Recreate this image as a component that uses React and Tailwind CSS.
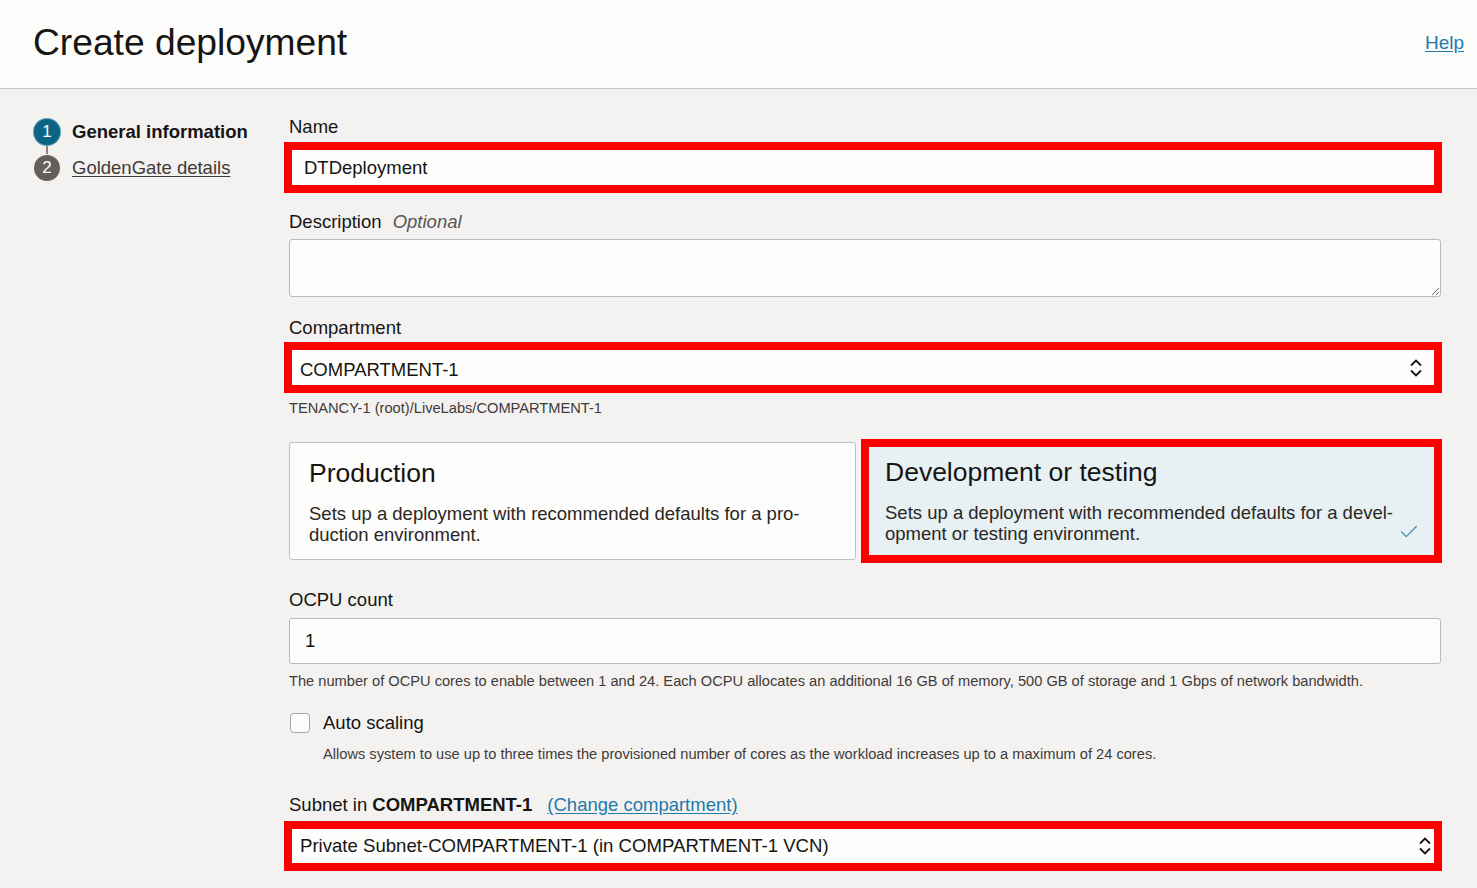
import { Check } from "lucide-react";

function SelectChevron({ className }) {
  return (
    <svg width="14" height="20" viewBox="0 0 14 20" fill="none" className={className}>
      <path d="M2 7.5 L7 2.5 L12 7.5" stroke="#161513" strokeWidth="1.8" />
      <path d="M2 12.5 L7 17.5 L12 12.5" stroke="#161513" strokeWidth="1.8" />
    </svg>
  );
}

function Label({ children, className = "" }) {
  return (
    <div className={"ml-[5px] text-[18.5px] leading-[22px] text-[#161513] " + className}>
      {children}
    </div>
  );
}

function Helper({ children, className = "" }) {
  return (
    <div className={"text-[14.65px] leading-[18px] text-[#3f3b38] " + className}>{children}</div>
  );
}

export default function App() {
  return (
    <div className="min-h-screen bg-[#f3f2f1] text-[#161513] font-['Liberation_Sans',Arial,sans-serif]">
      {/* page header */}
      <header className="h-[89px] bg-[#fcfcfb] border-b border-[#c9c5c2] flex items-start justify-between pl-[33px] pr-[13px]">
        <h1 className="mt-[24px] text-[37.2px] leading-[37px] font-normal">Create deployment</h1>
        <a href="#" className="mt-[33px] text-[19px] leading-[19px] text-[#227aab] underline underline-offset-2">
          Help
        </a>
      </header>

      <div className="flex pl-[34px]">
        {/* steps */}
        <nav className="w-[250px] pt-[29px]">
          <div className="flex items-center gap-[12px]">
            <span className="w-[26px] h-[26px] rounded-full bg-[#0c6485] ring-1 ring-[#5c9bb3] text-white text-[17px] flex items-center justify-center">
              1
            </span>
            <span className="text-[18.5px] font-bold">General information</span>
          </div>
          <div className="ml-[12px] w-[2px] h-[8px] bg-[#8a8480]" />
          <div className="flex items-center gap-[12px]">
            <span className="w-[26px] h-[26px] rounded-full bg-[#655f5b] text-white text-[17px] flex items-center justify-center">
              2
            </span>
            <a href="#" className="text-[18.5px] text-[#3f3b38] underline underline-offset-2">
              GoldenGate details
            </a>
          </div>
        </nav>

        {/* form */}
        <form className="w-[1158px] pt-[27px] pb-[20px]">
          <Label>Name</Label>
          <div className="mt-[4px] h-[51px] border-[8px] border-[#ff0000] bg-[#fdfdfc] flex items-center pl-[12px] text-[18.5px]">
            DTDeployment
          </div>

          <Label className="mt-[18px]">
            Description <span className="ml-[6px] italic text-[#5b5754]">Optional</span>
          </Label>
          <textarea
            readOnly
            className="block mt-[6px] ml-[5px] w-[1152px] h-[58px] bg-[#fdfdfc] border border-[#bcb8b5] rounded-[3px]"
          />

          <Label className="mt-[20px]">Compartment</Label>
          <div className="mt-[3px] h-[51px] border-[8px] border-[#ff0000] bg-[#fdfdfc] flex items-center justify-between pl-[8px] pr-[11px] text-[18.5px]">
            <span className="pt-[5px]">COMPARTMENT-1</span>
            <SelectChevron />
          </div>
          <Helper className="mt-[6px] ml-[5px]">TENANCY-1 (root)/LiveLabs/COMPARTMENT-1</Helper>

          {/* deployment type */}
          <div className="mt-[22px] flex gap-[5px]">
            <div className="mt-[3px] ml-[5px] w-[567px] h-[118px] bg-[#fdfdfc] border border-[#c4c0bd] rounded-[3px] pl-[19px] pt-[15px]">
              <div className="text-[26.5px] leading-[30px]">Production</div>
              <p className="mt-[15px] text-[18.5px] leading-[21px] text-[#2a2623]">
                Sets up a deployment with recommended defaults for a pro-
                <br />
                duction environment.
              </p>
            </div>
            <div className="relative flex-1 h-[124px] border-[8px] border-[#ff0000] bg-[#e7f1f4] pl-[16px] pt-[10px]">
              <div className="text-[26.5px] leading-[30px]">Development or testing</div>
              <p className="mt-[15px] text-[18.5px] leading-[21px] text-[#2a2623]">
                Sets up a deployment with recommended defaults for a devel-
                <br />
                opment or testing environment.
              </p>
              <Check className="absolute right-[14px] bottom-[12px] text-[#3d8aa6]" size={22} strokeWidth={1.3} />
            </div>
          </div>

          <Label className="mt-[26px]">OCPU count</Label>
          <div className="mt-[7px] ml-[5px] w-[1152px] h-[46px] bg-[#fdfdfc] border border-[#bcb8b5] rounded-[3px] flex items-center pl-[15px] text-[18.5px]">
            1
          </div>
          <Helper className="mt-[8px] ml-[5px]">
            The number of OCPU cores to enable between 1 and 24. Each OCPU allocates an additional 16 GB of memory, 500 GB of storage and 1 Gbps of network bandwidth.
          </Helper>

          <div className="mt-[22px] ml-[6px] flex items-center gap-[13px] h-[22px]">
            <span className="w-[20px] h-[20px] bg-[#fdfdfc] border border-[#a9a5a2] rounded-[4px]" />
            <span className="text-[18.5px]">Auto scaling</span>
          </div>
          <Helper className="mt-[11px] ml-[39px]">
            Allows system to use up to three times the provisioned number of cores as the workload increases up to a maximum of 24 cores.
          </Helper>

          <Label className="mt-[31px] flex items-baseline">
            <span>
              Subnet in <span className="font-bold">COMPARTMENT-1</span>
            </span>
            <a href="#" className="ml-[15px] text-[18.5px] text-[#227aab] underline underline-offset-2">
              (Change compartment)
            </a>
          </Label>
          <div className="mt-[5px] h-[50px] border-[8px] border-[#ff0000] bg-[#fdfdfc] flex items-center justify-between pl-[8px] pr-[2px] text-[18.6px]">
            <span>Private Subnet-COMPARTMENT-1 (in COMPARTMENT-1 VCN)</span>
            <SelectChevron />
          </div>
        </form>
      </div>
    </div>
  );
}
